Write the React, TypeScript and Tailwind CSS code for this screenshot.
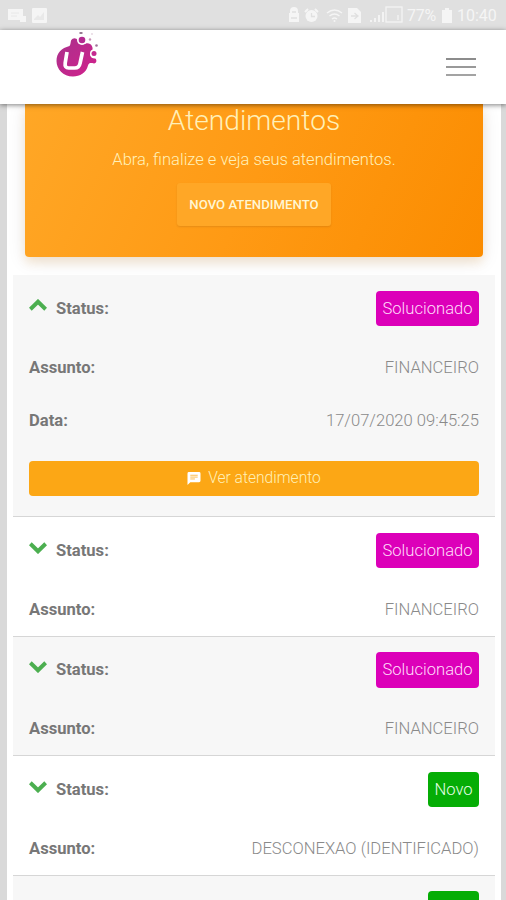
import React from 'react';

interface Ticket {
  status: string;
  subject: string;
  date?: string;
  open?: boolean;
}

const tickets: Ticket[] = [
  { status: 'Solucionado', subject: 'FINANCEIRO', date: '17/07/2020 09:45:25', open: true },
  { status: 'Solucionado', subject: 'FINANCEIRO' },
  { status: 'Solucionado', subject: 'FINANCEIRO' },
  { status: 'Novo', subject: 'DESCONEXAO (IDENTIFICADO)' },
];

const StatusBar: React.FC = () => (
  <div className="flex h-[30px] shrink-0 items-center justify-between bg-[#e0e0e0] pr-[9px] pl-2 text-[#f5f5f5]">
    <div className="flex items-center gap-[6px]">
      <svg width="18" height="16" viewBox="0 0 18 16" fill="currentColor">
        <path d="M0 2h15v7h3v6h-6v-2H0z" />
        <path d="M3 6h8M3 9h6" stroke="#e8e8e8" />
      </svg>
      <svg width="15" height="15" viewBox="0 0 15 15" fill="currentColor">
        <rect width="15" height="15" rx="1" />
        <path d="M2 11l4-4 2 2 4-5v8H2z" fill="#e9e9e9" />
      </svg>
    </div>
    <div className="flex items-center">
      <svg width="12" height="16" viewBox="0 0 12 16" fill="currentColor">
        <path d="M2 6V4a4 4 0 0 1 8 0v2h1v9H1V6z" />
        <path d="M4 5h4M3 11h6" stroke="#e0e0e0" strokeWidth="1.3" />
      </svg>
      <svg className="ml-1" width="15" height="15" viewBox="0 0 15 15" fill="currentColor">
        <circle cx="7.5" cy="8" r="6" />
        <path d="M1 4l3-3M14 4l-3-3" stroke="currentColor" strokeWidth="2" />
        <path d="M7.5 5v3.5H11" fill="none" stroke="#e0e0e0" strokeWidth="1.3" />
      </svg>
      <svg className="ml-[7px]" width="17" height="15" viewBox="0 0 17 15" fill="none" stroke="currentColor" strokeWidth="1.4">
        <path d="M1 5q7.5-6 15 0M3.5 8q5-4 10 0M6 11q2.5-2 5 0" />
        <circle cx="8.5" cy="13" r="1" fill="currentColor" stroke="none" />
      </svg>
      <svg className="ml-[5px]" width="13" height="15" viewBox="0 0 13 15" fill="currentColor">
        <path d="M0 0h9l4 4v11H0z" />
        <path d="M3 8h7M6.5 5l3.5 3-3.5 3" stroke="#e0e0e0" strokeWidth="1.3" fill="none" />
      </svg>
      <svg className="ml-2" width="35" height="18" viewBox="0 0 35 18" fill="none" stroke="currentColor" strokeWidth="1.2">
        <path d="M2 16v-2M6 16v-4M10 16V9M14 16V6" strokeWidth="1.8" />
        <rect x="17" y="1" width="16" height="15" />
        <path d="M29 14V9" />
      </svg>
      <span className="ml-[3px] w-[31px] pt-[2px] text-[16px] tracking-[-0.3px]">77%</span>
      <svg className="ml-[4px]" width="10" height="15" viewBox="0 0 10 15" fill="currentColor">
        <path d="M3 0h4v2h3v13H0V2h3z" />
      </svg>
      <span className="ml-[5px] w-[40px] pt-[2px] text-[16px]">10:40</span>
    </div>
  </div>
);

const Logo: React.FC = () => (
  <svg width="44" height="50" viewBox="0 0 44 50">
    <defs>
      <linearGradient id="logo" x1="0" y1="0" x2="1" y2="1">
        <stop offset="0" stopColor="#a8328c" />
        <stop offset="1" stopColor="#d3208c" />
      </linearGradient>
    </defs>
    <path
      fill="url(#logo)"
      d="M16 10.5c2-3 5-3 7 0 2 3 5 5 8 3 5-1 8 4 6 8l-2 3c1 3 2 4 5 4 2 .5 2 5-1 5-3-.5-5-1-6 2C31 43 25 46.5 18 46.5 8 46.5 1.500 39 1.500 31c0-8 5-13 13-15 1-1 1-3 1.500-5.500z"
    />
    <circle cx="27" cy="10" r="5" fill="#fff" />
    <circle cx="27" cy="10" r="3.3" fill="#b42a90" />
    <circle cx="39" cy="23.5" r="4" fill="#fff" />
    <circle cx="39" cy="23.5" r="2.5" fill="#c52a90" />
    <ellipse cx="26" cy="3" rx="1.8" ry=".9" fill="#8e7089" />
    <circle cx="35" cy="9.5" r="1.2" fill="#c795b7" />
    <circle cx="41.5" cy="15.5" r="1.3" fill="#a4739b" />
    <circle cx="37" cy="4" r=".9" fill="#e4d4df" />
    <path d="M12 22l-1.800 11q-.7 5 3.500 5h6q4.500 0 5.300-4.500L27.500 22" fill="none" stroke="#fff" strokeWidth="3.7" />
  </svg>
);

const Header: React.FC = () => (
  <header className="z-10 flex h-[74px] shrink-0 justify-between bg-white pr-[30px] pl-[55px] shadow-[0_1px_5px_rgba(0,0,0,0.5)]">
    <Logo />
    <button className="mt-[28px] flex h-[18px] w-[30px] flex-col justify-between">
      <span className="h-[2px] w-full bg-[#8c8c8c]" />
      <span className="h-[2px] w-full bg-[#999]" />
      <span className="h-[2px] w-full bg-[#a3a3a3]" />
    </button>
  </header>
);

const Hero: React.FC = () => (
  <section className="mr-[12px] ml-[12px] flex h-[153px] shrink-0 flex-col items-center rounded-b-[4px] bg-linear-[115deg,#ffa726,#ff9a14_50%,#fb8c00] text-[#fff0b8] shadow-[0_4px_18px_rgba(0,0,0,0.1),0_6px_10px_rgba(255,152,0,0.12)]">
    <h1 className="mt-px text-[28.2px] leading-[32px] font-light">Atendimentos</h1>
    <p className="mt-[12px] text-[16.55px] leading-[22px] font-light">Abra, finalize e veja seus atendimentos.</p>
    <button className="mt-[12px] h-[43px] w-[154px] rounded-[3px] bg-[#ffa726] text-[13.2px] font-medium text-[#fff6d2] shadow-[0_1px_2px_rgba(0,0,0,0.1)]">
      NOVO ATENDIMENTO
    </button>
  </section>
);

const TicketItem: React.FC<{ ticket: Ticket }> = ({ ticket }) => (
  <li className="shrink-0 border-b border-[#d6d6d6] px-4 pt-[15.5px] odd:bg-[#f7f7f7]">
    <div className="mb-[15px] flex h-[35.5px] items-center justify-between">
      <div className="flex items-center gap-[9px]">
        <svg
          className={ticket.open ? 'mb-[6px]' : 'mb-[5px] rotate-180'}
          width="18"
          height="12"
          viewBox="0 0 18 12"
          fill="none"
          stroke="#4caf50"
          strokeWidth="4"
        >
          <path d="M1.3 10.2L9 2.700l7.700 7.500" />
        </svg>
        <span className="pt-[2px] font-bold text-[#777]">Status:</span>
      </div>
      <span
        className={
          ticket.status === 'Novo'
            ? 'flex h-full w-[51px] items-center justify-center rounded-[4px] bg-[#05ad05] pt-[2px] text-[#e6ffe6]'
            : 'flex h-full w-[103px] items-center justify-center rounded-[4px] bg-[#dc00b9] pt-[2px] text-[#ffdcfa]'
        }
      >
        {ticket.status}
      </span>
    </div>
    <div className="flex h-[52.5px] items-center justify-between pt-[2px]">
      <span className="font-bold text-[#777]">Assunto:</span>
      <span>{ticket.subject}</span>
    </div>
    {ticket.open && (
      <>
        <div className="flex h-[53px] items-center justify-between pt-[3px]">
          <span className="font-bold text-[#777]">Data:</span>
          <span>{ticket.date}</span>
        </div>
        <button className="mt-[14.5px] mb-[20.5px] flex h-[34.5px] w-full items-center justify-center gap-[7px] rounded-[4px] bg-[#fca715] pt-px text-[15.6px] text-[#fff0b8]">
          <svg width="14" height="13" viewBox="0 0 14 14">
            <path d="M1.5 0h11A1.5 1.5 0 0 1 14 1.500v8a1.500 1.500 0 0 1-1.500 1.500H3l-3 3V1.500A1.500 1.500 0 0 1 1.500 0z" fill="#fff" />
            <path d="M3 3.500h8M3 5.500h8M3 7.500h5" stroke="#fca715" strokeWidth=".8" />
          </svg>
          Ver atendimento
        </button>
      </>
    )}
  </li>
);

export default function App() {
  return (
    <div className="flex h-[900px] flex-col overflow-hidden bg-[#d9d9d9] font-['Roboto',sans-serif]">
      <StatusBar />
      <Header />
      <main className="mr-[5px] ml-[7px] flex min-h-0 flex-1 flex-col overflow-hidden bg-white px-[6px]">
        <Hero />
        <ul className="mt-[18px] text-[16.6px] font-light text-[#8a8a8a]">
          {tickets.map((ticket, index) => (
            <TicketItem key={index} ticket={ticket} />
          ))}
          {/* top edge of the next item */}
          <li className="flex h-[25px] justify-end bg-[#f7f7f7] px-4 pt-[15px]">
            <span className="h-full w-[51px] rounded-t-[4px] bg-[#05ad05]" />
          </li>
        </ul>
      </main>
    </div>
  );
}
